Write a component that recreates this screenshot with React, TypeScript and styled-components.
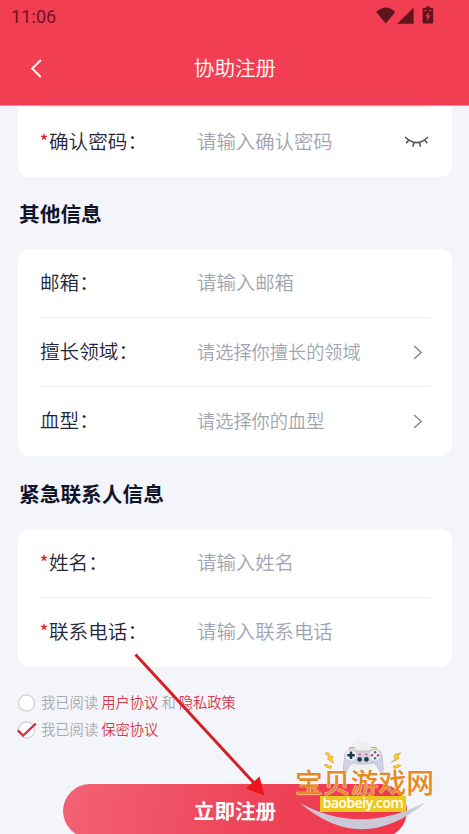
import React from 'react';
import styled, { createGlobalStyle, css } from 'styled-components';

interface FieldProps {
  label: string;
  placeholder: string;
  required?: boolean;
  type?: 'text' | 'password' | 'select';
}

interface SectionProps {
  title: string;
  fields: FieldProps[];
}

interface AgreementProps {
  checked: boolean;
  links: string[];
}

const passwordField: FieldProps = {
  label: '确认密码',
  placeholder: '请输入确认密码',
  required: true,
  type: 'password',
};

const sections: SectionProps[] = [
  {
    title: '其他信息',
    fields: [
      { label: '邮箱', placeholder: '请输入邮箱' },
      { label: '擅长领域', placeholder: '请选择你擅长的领域', type: 'select' },
      { label: '血型', placeholder: '请选择你的血型', type: 'select' },
    ],
  },
  {
    title: '紧急联系人信息',
    fields: [
      { label: '姓名', placeholder: '请输入姓名', required: true },
      { label: '联系电话', placeholder: '请输入联系电话', required: true },
    ],
  },
];

const agreements: AgreementProps[] = [
  { checked: false, links: ['用户协议', '隐私政策'] },
  { checked: true, links: ['保密协议'] },
];

const StatusIcons: React.FC = () => (
  <svg width="60" height="20" viewBox="0 0 60 20" fill="#5f141e">
    <path d="M0.2 5Q9.8 -4 19.4 5L9.8 16.6Z" />
    <path d="M37.6 0.8V16.8H21.2Z" />
    <path d="M49.8 -0.6H54.2V1H55.8Q57.2 1 57.2 2.4V15.2Q57.2 16.6 55.8 16.6H48Q46.6 16.6 46.6 15.2V2.4Q46.6 1 48 1H49.8Z" />
    <path d="M52.8 5L49.4 9.6H51.4L50.9 13.8L54.5 8.4H52.4Z" fill="#f23e53" />
    <path d="M48.2 3.6H50.6M53.4 3.6H55.6" stroke="#f23e53" strokeWidth="1" />
  </svg>
);

const ClosedEye: React.FC = () => (
  <svg width="26" height="16" viewBox="0 0 26 16" fill="none" stroke="#555" strokeWidth="1.6">
    <path d="M1.2 3Q12.6 14.2 24 3M5 5.8L2.2 9.2M10 8.2L9 12.6M15.4 8.2L16.6 12.6M20.4 5.8L23.2 9.2" />
  </svg>
);

const Field: React.FC<FieldProps> = ({ label, placeholder, required, type = 'text' }) => (
  <Row>
    <Label>
      {required && <Star>*</Star>}
      {label}：
    </Label>
    <Placeholder $small={type === 'select'}>{placeholder}</Placeholder>
    {type === 'password' && <ClosedEye />}
    {type === 'select' && (
      <Chevron width="14" height="16" viewBox="0 0 14 16">
        <path d="M3.2 2L10.2 8.4L3.2 14.8" fill="none" stroke="#858585" strokeWidth="1.4" />
      </Chevron>
    )}
  </Row>
);

const Agreement: React.FC<AgreementProps> = ({ checked, links }) => (
  <AgreementRow>
    <svg width="20" height="18" viewBox="0 0 20 18">
      <circle cx="8.6" cy="9" r="8.1" fill="#fff" stroke="#ccc" strokeWidth="1.1" />
      {checked && <path d="M-0.2 9.4L5.2 14.6L17.8 2.6" fill="none" stroke="#cf3040" strokeWidth="2.2" />}
    </svg>
    <AgreementText>我已阅读</AgreementText>
    {links.map((link, i) => (
      <React.Fragment key={link}>
        {i > 0 && <AgreementText>和</AgreementText>}
        <AgreementText $link>{link}</AgreementText>
      </React.Fragment>
    ))}
  </AgreementRow>
);

const Watermark: React.FC = () => (
  <WatermarkBox>
    <svg width="150" height="94" viewBox="0 0 150 94">
      <circle cx="72" cy="17" r="15" fill="#eeefee" />
      <path d="M10 64Q70 97 136 63Q72 117 10 64Z" fill="#cac9d7" />
      <path
        d="M60 10.6C64 9.8 66 12 70 12H77C81 12 83 9.8 87 10.6C91 11.6 92 15 92.3 19C92.8 25 93.8 30 92.6 33.6C90 35.6 88.4 28 84.6 24.6C82 23 80 25 77 25H69C66 25 64 23 61.4 24.6C57.6 28 56.6 35.6 54 33.8C52.4 30 54 24 54.4 19C54.6 15 56 11.6 60 10.6Z"
        fill="#d0d1e1"
        stroke="#b0b0c6"
        strokeWidth=".6"
      />
      <path d="M59 9.4L61 8.6H65M81 8.6H85L87 9.4" fill="none" stroke="#efa431" strokeWidth="1.4" />
      <circle cx="61" cy="16.3" r="5.3" fill="#f5f6fa" />
      <circle cx="85" cy="16.3" r="5.3" fill="#f5f6fa" />
      <path d="M61 12.6V20M57.3 16.3H64.7" stroke="#123c4b" strokeWidth="2.6" />
      <circle cx="85" cy="13.3" r="1.4" fill="#29869d" />
      <circle cx="85" cy="19.3" r="1.4" fill="#29869d" />
      <circle cx="82" cy="16.3" r="1.4" fill="#d8404f" />
      <circle cx="88" cy="16.3" r="1.4" fill="#d8404f" />
      <circle cx="69.6" cy="20.4" r="2.3" fill="#173f4e" />
      <circle cx="76.4" cy="20.4" r="2.3" fill="#173f4e" />
      <path d="M68.4 15.4H70.8M75.2 15.4H77.6" stroke="#e44d61" strokeWidth="1.3" />
      <g fill="#f7d21e" stroke="#e49a25" strokeWidth=".7">
        <path d="M35 14L38.6 13.8L40 17L43 17.4L42 20L43.4 24L37.4 20L39 18.6Z" />
        <path d="M34 26L37.6 25.4L38.4 27L41.6 27L40.6 29.4L36.8 28.4Z" />
        <path d="M110.6 13.8L105 15.4L103.8 18.6L106 19.6L101.4 23.4L109 19.6L107.8 17.6Z" />
        <path d="M111 26.4L107.4 25.4L105.6 27L103.4 27L104 29.4L108.4 28.4Z" />
      </g>
    </svg>
    <BrandName>宝贝游戏网</BrandName>
    <BrandUrl>baobeiy.com</BrandUrl>
  </WatermarkBox>
);

export default function App() {
  return (
    <Screen>
      <GlobalStyle />
      <Header>
        <StatusBar>
          <span>11:06</span>
          <StatusIcons />
        </StatusBar>
        <NavBar>
          <svg width="14" height="20" viewBox="0 0 14 20" fill="none" stroke="#fff" strokeWidth="1.9">
            <path d="M11.8 1L3.2 9.5L11.8 18" />
          </svg>
          <Title>协助注册</Title>
        </NavBar>
      </Header>
      <Content>
        <Card $cut>
          <Field {...passwordField} />
        </Card>
        {sections.map((section) => (
          <React.Fragment key={section.title}>
            <SectionTitle>{section.title}</SectionTitle>
            <Card>
              {section.fields.map((field) => (
                <Field key={field.label} {...field} />
              ))}
            </Card>
          </React.Fragment>
        ))}
        <Agreements>
          {agreements.map((item) => (
            <Agreement key={item.links[0]} {...item} />
          ))}
        </Agreements>
        <SubmitButton>立即注册</SubmitButton>
      </Content>
      <Arrow width="140" height="150" viewBox="0 0 140 150">
        <path d="M5.5 4.5L124 133" stroke="#d32127" strokeWidth="3" />
        <path d="M134.5 145.5L116 138.5L129.5 126.5Z" fill="#ec1520" />
      </Arrow>
      <Watermark />
    </Screen>
  );
}

const GlobalStyle = createGlobalStyle`
  * {
    box-sizing: border-box;
  }

  body {
    margin: 0;
    font-family: 'Noto Sans CJK SC', sans-serif;
    font-weight: 350;
  }

  svg {
    display: block;
    flex-shrink: 0;
    overflow: visible;
  }
`;

const Screen = styled.main`
  position: relative;
  width: 469px;
  height: 834px;
  overflow: hidden;
  background: #f4f5fa;
`;

const Header = styled.header`
  height: 106px;
  background: #f23e53;
  border-bottom: 1px solid #f78593;
`;

const StatusBar = styled.div`
  display: flex;
  justify-content: space-between;
  height: 32px;
  padding: 7px 33px 0 11px;
  font-family: Roboto, sans-serif;
  font-size: 18px;
  font-weight: 450;
  line-height: 20px;
  letter-spacing: 0.1px;
  color: #71141f;
`;

const NavBar = styled.div`
  display: grid;
  grid-template-columns: 14px 1fr 14px;
  align-items: center;
  height: 73px;
  padding: 0 28px 0 29px;
`;

const Title = styled.h1`
  margin: 0;
  padding-bottom: 3px;
  font-size: 20.6px;
  font-weight: 350;
  line-height: 30px;
  text-align: center;
  color: #fff;
`;

const Content = styled.div`
  padding: 0 17px 0 18px;
`;

const Row = styled.div`
  display: flex;
  align-items: center;
  height: 69px;
  border-bottom: 1px solid #eeeff1;

  &:last-child {
    border-bottom-color: transparent;
  }
`;

const Card = styled.section<{ $cut?: boolean }>`
  padding: 0 22px;
  border-radius: 12px;
  background: #fff;

  ${({ $cut }) =>
    $cut &&
    css`
      border-radius: 0 0 12px 12px;

      ${Row} {
        height: 71px;
        border-top: 2px solid #f9edf0;
      }
    `}
`;

const Label = styled.div`
  width: 157px;
  padding-bottom: 2px;
  font-size: 19.6px;
  line-height: 28px;
  white-space: nowrap;
  color: #232538;
`;

const Star = styled.span`
  display: inline-block;
  width: 9px;
  margin-left: -0.5px;
  margin-right: 0.5px;
  font-weight: 400;
  color: #e01b22;
`;

const Placeholder = styled.div<{ $small: boolean }>`
  flex: 1;
  padding-bottom: 2px;
  font-size: ${({ $small }) => ($small ? '18.2px' : '19.4px')};
  line-height: 28px;
  white-space: nowrap;
  color: #a0a4b0;
`;

const Chevron = styled.svg`
  margin-right: 5px;
`;

const SectionTitle = styled.h2`
  display: flex;
  align-items: center;
  height: 72.4px;
  margin: 0;
  padding-left: 1px;
  font-size: 20.7px;
  font-weight: 700;
  color: #10142b;
`;

const Agreements = styled.div`
  padding-top: 22.6px;
`;

const AgreementRow = styled.div`
  display: flex;
  align-items: center;
  gap: 3px;
  height: 27.4px;
`;

const AgreementText = styled.span<{ $link?: boolean }>`
  padding-bottom: 3px;
  font-size: 14.3px;
  color: ${({ $link }) => ($link ? '#d33b4c' : '#a8a8aa')};
`;

const SubmitButton = styled.button`
  display: flex;
  align-items: center;
  justify-content: center;
  width: 344px;
  height: 54px;
  margin: 40px 0 0 45px;
  padding: 0 0 3px;
  border: 0;
  border-radius: 27px;
  background: linear-gradient(100deg, #f26273 0%, #ee4459 55%, #f03549 100%);
  font-family: inherit;
  font-size: 20.6px;
  font-weight: 700;
  color: #fff;
`;

const Arrow = styled.svg`
  position: absolute;
  top: 650px;
  left: 130px;
`;

const WatermarkBox = styled.div`
  position: absolute;
  top: 739px;
  left: 290px;
  width: 150px;
  height: 94px;
`;

const BrandName = styled.div`
  position: absolute;
  top: 29px;
  left: 5px;
  font-size: 27.8px;
  font-weight: 500;
  line-height: 26px;
  white-space: nowrap;
  color: #e58a1d;
  text-shadow: 0 0 1px #fff, 0 0 1px #fff;
`;

const BrandUrl = styled.div`
  position: absolute;
  top: 57px;
  left: 30px;
  width: 86px;
  height: 16px;
  background: #edc91f;
  font-family: 'Open Sans', sans-serif;
  font-size: 13.8px;
  font-weight: 600;
  line-height: 14px;
  letter-spacing: -0.4px;
  text-align: center;
  color: #fff;
`;
